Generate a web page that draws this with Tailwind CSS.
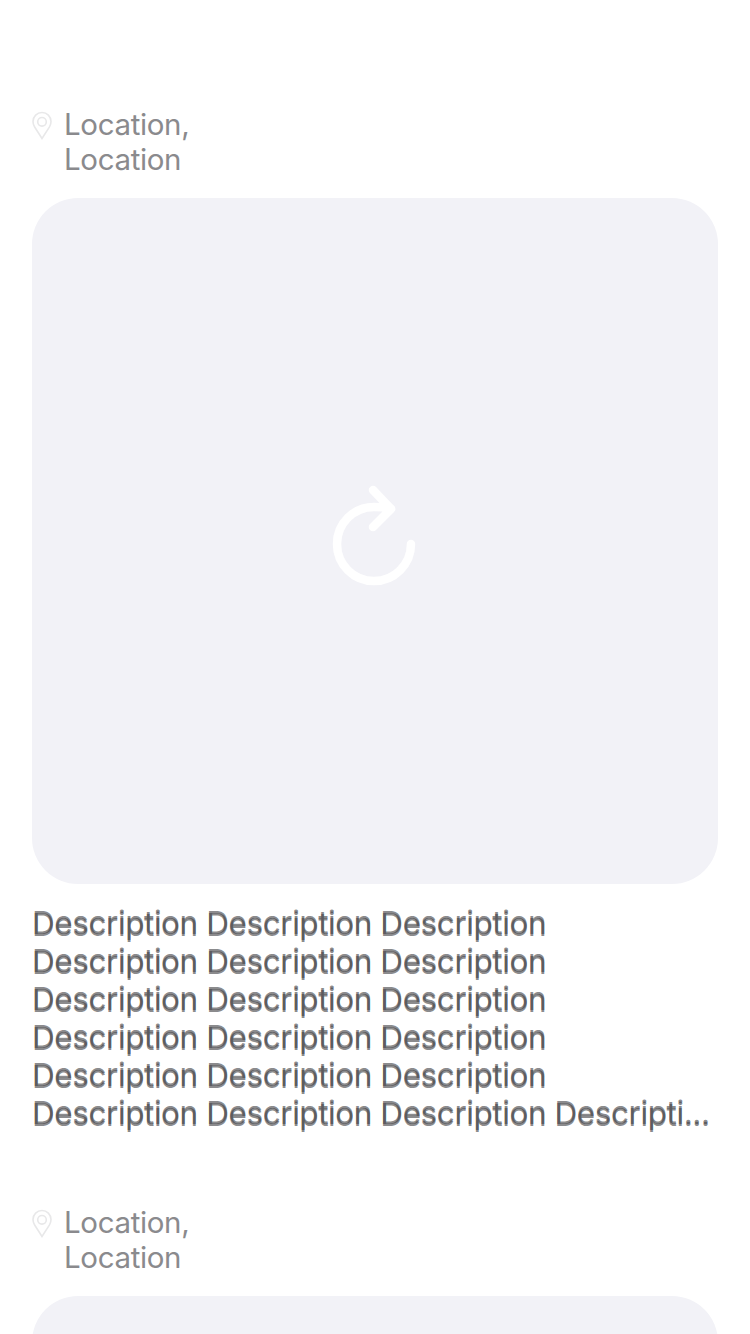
<!DOCTYPE html>
<html lang="en">
<head>
<meta charset="utf-8">
<title>Feed</title>
<script src="https://cdn.jsdelivr.net/npm/@tailwindcss/browser@4"></script>
</head>
<body class="bg-white font-['Inter','Liberation_Sans',sans-serif]">
<main class="flex h-[1334px] w-[750px] flex-col overflow-hidden px-8 pt-[107px]">
  <article class="h-[1098px] shrink-0">
    <header class="flex h-[91px] gap-3">
      <svg class="mt-[4px] h-[30px] w-5 shrink-0" viewBox="0 0 20 30" fill="none" stroke="#e8e8e9" stroke-width="1.600"><path d="M10 27.500L2.500 15.800C1.500 14.200 1 12.500 1 10.500a9 9 0 0 1 18 0c0 2-.5 3.700-1.500 5.300Z"/><circle cx="10" cy="10.800" r="4.300"/></svg>
      <p class="text-[29.5px] leading-[35px] tracking-[-0.35px] text-[#8a8a8d]">Location,<br>Location</p>
    </header>
    <div class="flex h-[686px] items-center justify-center rounded-[46px] bg-[#f2f2f7]">
      <svg class="h-[110px] w-[110px]" viewBox="320 486 110 110" fill="none" stroke="white" stroke-width="8.500" stroke-linecap="round" stroke-linejoin="round" overflow="visible"><path d="M411 544a37 37 0 1 1-37-37c7 0 12 .4 17 1.500M373 490l18 19L373 527"/></svg>
    </div>
    <p class="mt-[20px] whitespace-nowrap text-[31.5px] leading-[38px] tracking-[-0.425px] text-[#3c3c40]/60 [text-shadow:0_2px_0_rgb(60_60_64/0.6)]">Description Description Description<br>Description Description Description<br>Description Description Description<br>Description Description Description<br>Description Description Description<br>Description Description Description Descripti...</p>
  </article>
  <article class="h-[1098px] shrink-0">
    <header class="flex h-[91px] gap-3">
      <svg class="mt-[4px] h-[30px] w-5 shrink-0" viewBox="0 0 20 30" fill="none" stroke="#e8e8e9" stroke-width="1.600"><path d="M10 27.500L2.500 15.800C1.500 14.200 1 12.500 1 10.500a9 9 0 0 1 18 0c0 2-.5 3.700-1.500 5.300Z"/><circle cx="10" cy="10.800" r="4.300"/></svg>
      <p class="text-[29.5px] leading-[35px] tracking-[-0.35px] text-[#8a8a8d]">Location,<br>Location</p>
    </header>
    <div class="h-[686px] rounded-[46px] bg-[#f2f2f7]"></div>
  </article>
</main>
</body>
</html>
